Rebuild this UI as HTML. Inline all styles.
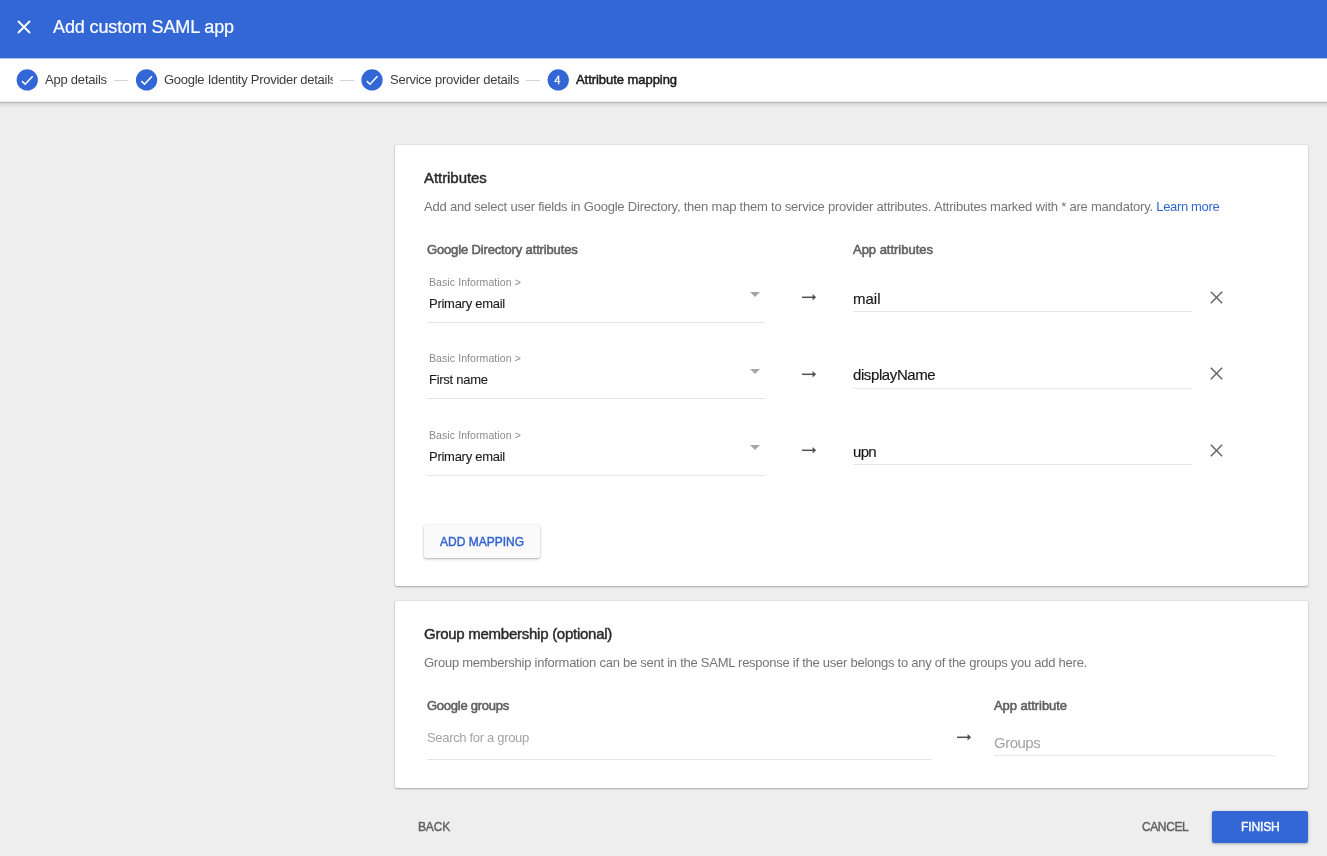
<!DOCTYPE html>
<html>
<head>
<meta charset="utf-8">
<title>Add custom SAML app</title>
<style>
html,body{margin:0;padding:0;}
body{width:1327px;height:856px;overflow:hidden;background:#eeeeee;font-family:"Liberation Sans",sans-serif;position:relative;color:#212121;}
.abs{position:absolute;white-space:nowrap;line-height:1;will-change:transform;}
.hdr{position:absolute;left:0;top:0;width:1327px;height:58px;background:#3367d6;}
.stepbar{position:absolute;left:0;top:58px;width:1327px;height:43px;background:#fff;}
.hedge{position:absolute;left:0;top:58px;width:1327px;height:1px;background:#adc2ef;}
.sshadow{position:absolute;left:0;top:101px;width:1327px;height:8px;background:linear-gradient(to bottom,#ebebeb 0,#ebebeb 1px,#bcbcbc 1px,#bcbcbc 2px,#d5d5d5 2px,#d5d5d5 3px,#dedede 3px,#dedede 4px,#e4e4e4 4px,#e4e4e4 5px,#e8e8e8 5px,#e8e8e8 6px,#ebebeb 6px,#ebebeb 7px,#ededed 7px,#ededed 8px);}
.title{left:53px;top:18px;font-size:18px;color:#fff;letter-spacing:-0.13px;-webkit-text-stroke:0.2px #fff;}
.step{top:73px;font-size:13px;color:#3c3c3c;letter-spacing:-0.22px;}
.dash{position:absolute;top:80px;height:1px;background:#d4d4d4;width:14px;}
.card{position:absolute;left:395px;width:913px;background:#fff;border-radius:2px;box-shadow:0 1px 2px rgba(0,0,0,.28),0 0 0 1px rgba(0,0,0,.035);}
.h{font-size:15px;font-weight:400;-webkit-text-stroke:0.45px #2a2a2a;color:#2a2a2a;letter-spacing:-0.06px;}
.desc{font-size:13px;color:#757575;letter-spacing:-0.215px;}
.colh{font-size:13px;font-weight:400;-webkit-text-stroke:0.55px #606060;color:#606060;letter-spacing:-0.15px;}
.small{font-size:10.5px;color:#8a8a8a;letter-spacing:0.09px;}
.val{font-size:13px;color:#1c1c1c;-webkit-text-stroke:0.12px #1c1c1c;letter-spacing:-0.27px;}
.inp{font-size:15px;color:#161616;-webkit-text-stroke:0.15px #161616;}
.ul{position:absolute;height:1px;background:#e6e6e6;}
.tri{position:absolute;width:0;height:0;border-left:5px solid transparent;border-right:5px solid transparent;border-top:5px solid #a6a6a6;}
.btn{font-size:12px;font-weight:400;-webkit-text-stroke:0.4px;}
</style>
</head>
<body>
<div class="hdr"></div>
<svg class="abs" style="left:17px;top:20px" width="14" height="14" viewBox="0 0 14 14"><path d="M1 1 L13 13 M13 1 L1 13" stroke="#fff" stroke-width="1.9" fill="none"/></svg>
<div class="abs title">Add custom SAML app</div>

<div class="stepbar"></div>
<div class="hedge"></div>
<div class="sshadow"></div>
<svg class="abs" style="left:15px;top:68px" width="24" height="24" viewBox="0 0 24 24"><circle cx="12.25" cy="11.97" r="10.65" fill="#3367d6"/><path d="M7.05 13.17 L10.25 16.22 L17.70 8.22" stroke="#fff" stroke-width="1.55" fill="none"/></svg>
<div class="abs step" style="left:45px">App details</div>
<div class="dash" style="left:114px"></div>
<svg class="abs" style="left:135px;top:68px" width="24" height="24" viewBox="0 0 24 24"><circle cx="11.55" cy="11.97" r="10.65" fill="#3367d6"/><path d="M6.35 13.17 L9.55 16.22 L17.00 8.22" stroke="#fff" stroke-width="1.55" fill="none"/></svg>
<div class="abs step" style="left:164px;width:169px;overflow:hidden;letter-spacing:-0.27px;height:16px">Google Identity Provider details</div>
<div class="dash" style="left:340px"></div>
<svg class="abs" style="left:360px;top:68px" width="24" height="24" viewBox="0 0 24 24"><circle cx="12.00" cy="11.97" r="10.65" fill="#3367d6"/><path d="M6.80 13.17 L10.00 16.22 L17.45 8.22" stroke="#fff" stroke-width="1.55" fill="none"/></svg>
<div class="abs step" style="left:390px;letter-spacing:-0.255px">Service provider details</div>
<div class="dash" style="left:526px"></div>
<svg class="abs" style="left:546px;top:68px" width="24" height="24" viewBox="0 0 24 24"><circle cx="12.25" cy="11.97" r="10.65" fill="#3367d6"/></svg>
<div class="abs" style="left:547px;top:75px;width:21px;text-align:center;font-size:10.5px;color:#fff;-webkit-text-stroke:0.4px #fff">4</div>
<div class="abs step" style="left:576px;-webkit-text-stroke:0.5px #1c1c1c;color:#1c1c1c;letter-spacing:-0.05px">Attribute mapping</div>

<!-- Card 1 -->
<div class="card" style="top:145px;height:441px"></div>
<div class="abs h" style="left:424px;top:170px">Attributes</div>
<div class="abs desc" style="left:424px;top:199.5px">Add and select user fields in Google Directory, then map them to service provider attributes. Attributes marked with * are mandatory. <span style="color:#3367d6;letter-spacing:-0.35px">Learn more</span></div>
<div class="abs colh" style="left:427px;top:243px">Google Directory attributes</div>
<div class="abs colh" style="left:853px;top:243px;letter-spacing:-0.02px">App attributes</div>

<!-- rows -->
<div class="abs small" style="left:429px;top:276.5px">Basic Information &gt;</div>
<div class="abs val" style="left:429px;top:296.5px">Primary email</div>
<div class="tri" style="left:750px;top:292.0px"></div>
<div class="ul" style="left:427px;top:322px;width:338px"></div>
<svg class="abs" style="left:800px;top:291.0px" width="18" height="12" viewBox="0 0 18 12"><path d="M2 6.3 H13.2" stroke="#505050" stroke-width="1.5" fill="none"/><path d="M12.6 3.1 L16.1 6.3 L12.6 9.5 Z" fill="#505050"/></svg>
<div class="abs inp" style="left:853.2px;top:290.6px;letter-spacing:0.0px">mail</div>
<div class="ul" style="left:853px;top:311px;width:339px"></div>
<svg class="abs" style="left:1210px;top:290.5px" width="13" height="13" viewBox="0 0 13 13"><path d="M0.8 0.8 L12.2 12.2 M12.2 0.8 L0.8 12.2" stroke="#666" stroke-width="1.5" fill="none"/></svg>
<div class="abs small" style="left:429px;top:353.0px">Basic Information &gt;</div>
<div class="abs val" style="left:429px;top:373.0px">First name</div>
<div class="tri" style="left:750px;top:368.5px"></div>
<div class="ul" style="left:427px;top:398px;width:338px"></div>
<svg class="abs" style="left:800px;top:367.5px" width="18" height="12" viewBox="0 0 18 12"><path d="M2 6.3 H13.2" stroke="#505050" stroke-width="1.5" fill="none"/><path d="M12.6 3.1 L16.1 6.3 L12.6 9.5 Z" fill="#505050"/></svg>
<div class="abs inp" style="left:853.2px;top:367.1px;letter-spacing:-0.4px">displayName</div>
<div class="ul" style="left:853px;top:388px;width:339px"></div>
<svg class="abs" style="left:1210px;top:367.0px" width="13" height="13" viewBox="0 0 13 13"><path d="M0.8 0.8 L12.2 12.2 M12.2 0.8 L0.8 12.2" stroke="#666" stroke-width="1.5" fill="none"/></svg>
<div class="abs small" style="left:429px;top:429.7px">Basic Information &gt;</div>
<div class="abs val" style="left:429px;top:449.7px">Primary email</div>
<div class="tri" style="left:750px;top:445.2px"></div>
<div class="ul" style="left:427px;top:475px;width:338px"></div>
<svg class="abs" style="left:800px;top:444.2px" width="18" height="12" viewBox="0 0 18 12"><path d="M2 6.3 H13.2" stroke="#505050" stroke-width="1.5" fill="none"/><path d="M12.6 3.1 L16.1 6.3 L12.6 9.5 Z" fill="#505050"/></svg>
<div class="abs inp" style="left:853.2px;top:443.8px;letter-spacing:-0.7px">upn</div>
<div class="ul" style="left:853px;top:464px;width:339px"></div>
<svg class="abs" style="left:1210px;top:443.7px" width="13" height="13" viewBox="0 0 13 13"><path d="M0.8 0.8 L12.2 12.2 M12.2 0.8 L0.8 12.2" stroke="#666" stroke-width="1.5" fill="none"/></svg>

<div class="abs" style="left:424px;top:525px;width:116px;height:33px;background:#fafafa;border-radius:2px;box-shadow:0 1px 0 rgba(0,0,0,.06),0 1px 3px rgba(0,0,0,.26),0 0 1px rgba(0,0,0,.2)"></div>
<div class="abs btn" style="left:440.3px;top:536px;color:#3363cf;letter-spacing:0px">ADD MAPPING</div>

<!-- Card 2 -->
<div class="card" style="top:601px;height:187px"></div>
<div class="abs h" style="left:424px;top:626px;letter-spacing:-0.26px">Group membership (optional)</div>
<div class="abs desc" style="left:424px;top:655.5px;letter-spacing:-0.255px">Group membership information can be sent in the SAML response if the user belongs to any of the groups you add here.</div>
<div class="abs colh" style="left:427px;top:699px;letter-spacing:-0.25px">Google groups</div>
<div class="abs colh" style="left:994px;top:699px;letter-spacing:-0.055px">App attribute</div>
<div class="abs" style="left:427px;top:731px;font-size:13px;color:#a4a4a4;letter-spacing:-0.32px">Search for a group</div>
<div class="ul" style="left:427px;top:759px;width:505px"></div>
<div class="abs inp" style="left:994px;top:734.5px;color:#a2a2a2;-webkit-text-stroke:0;letter-spacing:-0.5px">Groups</div>
<div class="ul" style="left:994px;top:755px;width:281px"></div>
<svg class="abs" style="left:955px;top:731px" width="18" height="12" viewBox="0 0 18 12"><path d="M2 6.3 H13.2" stroke="#505050" stroke-width="1.5" fill="none"/><path d="M12.6 3.1 L16.1 6.3 L12.6 9.5 Z" fill="#505050"/></svg>

<div class="abs btn" style="left:418px;top:820.5px;color:#616161;letter-spacing:-0.17px">BACK</div>
<div class="abs btn" style="left:1142px;top:820.5px;color:#616161;letter-spacing:-0.4px">CANCEL</div>
<div class="abs" style="left:1212px;top:811px;width:96px;height:32px;background:#3367d6;border-radius:2px;box-shadow:0 1px 3px rgba(0,0,0,.3)"></div>
<div class="abs btn" style="left:1241px;top:820.5px;color:#fff;letter-spacing:-0.13px">FINISH</div>
</body>
</html>
